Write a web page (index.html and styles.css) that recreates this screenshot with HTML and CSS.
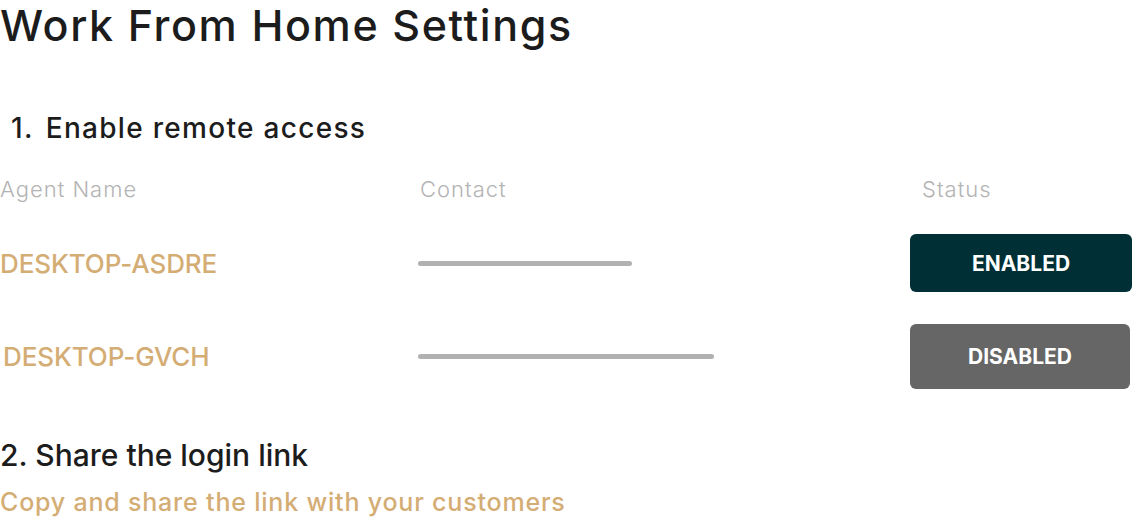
FILE: index.html
```html
<!DOCTYPE html>
<html>
<head>
<meta charset="utf-8">
<link rel="stylesheet" href="styles.css">
</head>
<body>
<main class="page">
  <h1 class="title">Work From Home Settings</h1>
  <h2 class="step step-1"><span class="num">1.</span>Enable remote access</h2>
  <div class="table">
    <div class="th">Agent Name</div>
    <div class="th th-contact">Contact</div>
    <div class="th th-status">Status</div>

    <div class="row row-1">
      <div class="agent">DESKTOP-ASDRE</div>
      <div class="contact"><span class="bar" style="width:214px"></span></div>
      <div class="status"><button class="btn btn-enabled">ENABLED</button></div>
    </div>
    <div class="row row-2">
      <div class="agent agent-2">DESKTOP-GVCH</div>
      <div class="contact"><span class="bar" style="width:296px"></span></div>
      <div class="status"><button class="btn btn-disabled">DISABLED</button></div>
    </div>
  </div>
  <h2 class="step step-2">2. Share the login link</h2>
  <p class="hint">Copy and share the link with your customers</p>
</main>
</body>
</html>
```

FILE: styles.css
```css
* { box-sizing: border-box; }
html, body { margin: 0; padding: 0; background: #fff; }
body {
  font-family: "Inter", "Liberation Sans", sans-serif;
  color: #1c1c1c;
}
.page {
  width: 1132px;
  display: flex;
  flex-direction: column;
}
.title {
  margin: 0;
  font-size: 43px;
  font-weight: 500;
  line-height: 50px;
  letter-spacing: 1.6px;
}
.step {
  margin: 0;
  font-weight: 500;
  line-height: 36px;
}
.step-1 {
  margin-top: 60px;
  padding-left: 11px;
  font-size: 28px;
  letter-spacing: 1.3px;
}
.step-1 .num { margin-right: 12px; }
.table {
  display: grid;
  grid-template-columns: 418px 492px 222px;
  margin-top: 29px;
}
.th {
  font-size: 22px;
  font-weight: 300;
  color: #b3b3b3;
  line-height: 28px;
  letter-spacing: 1px;
}
.th-contact { padding-left: 2px; }
.th-status { padding-left: 12px; }
.row { display: contents; }
.agent {
  display: flex;
  align-items: center;
  font-size: 26px;
  font-weight: 500;
  color: #d4ad75;
  letter-spacing: -0.1px;
}
.agent-2 { padding-left: 3px; }
.contact { display: flex; align-items: center; }
.bar {
  display: block;
  height: 5px;
  border-radius: 3px;
  background: #b1b1b1;
}
.status { display: flex; align-items: center; }
.btn {
  width: 222px;
  border: none;
  border-radius: 6px;
  color: #fff;
  font-family: inherit;
  font-size: 21px;
  font-weight: 700;
  padding: 0;
}
.row-1 > div { margin-top: 31px; }
.btn-enabled { background: #003035; height: 58px; }
.row-2 > div { margin-top: 32px; }
.btn-disabled { background: #666666; height: 65px; width: 220px; }
.step-2 {
  margin-top: 48px;
  font-size: 30px;
}
.hint {
  margin: 13px 0 0;
  font-size: 25px;
  font-weight: 500;
  color: #d4ad75;
  line-height: 32px;
  letter-spacing: 0.8px;
}
```
